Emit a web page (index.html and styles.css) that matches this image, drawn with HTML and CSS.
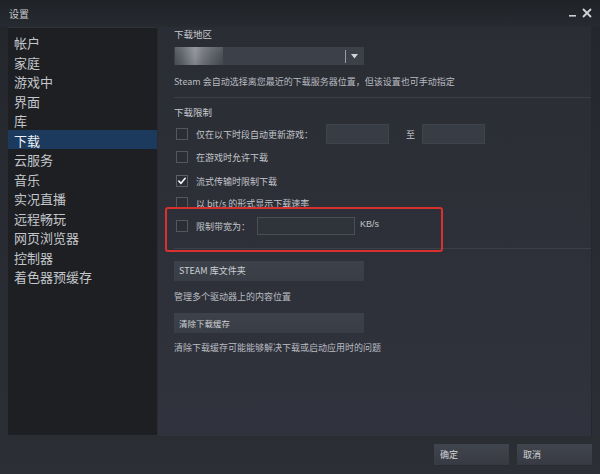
FILE: index.html
```html
<!DOCTYPE html>
<html lang="zh-CN">
<head>
<meta charset="utf-8">
<title>设置</title>
<link rel="stylesheet" href="styles.css">
</head>
<body>
<div class="window">
  <header class="titlebar">
    <span class="title">设置</span>
    <div class="controls">
      <svg class="ctl" width="8" height="10" viewBox="0 0 8 10"><rect x="0" y="7" width="7" height="1.6" fill="#c9ccd0"/></svg>
      <svg class="ctl" width="10" height="10" viewBox="0 0 10 10"><path d="M1 1 L9 9 M9 1 L1 9" stroke="#d2d5d8" stroke-width="1.8" fill="none"/></svg>
    </div>
  </header>
  <div class="main">
    <nav class="sidebar">
      <div class="nav-item">帐户</div>
      <div class="nav-item">家庭</div>
      <div class="nav-item">游戏中</div>
      <div class="nav-item">界面</div>
      <div class="nav-item">库</div>
      <div class="nav-item active">下载</div>
      <div class="nav-item">云服务</div>
      <div class="nav-item">音乐</div>
      <div class="nav-item">实况直播</div>
      <div class="nav-item">远程畅玩</div>
      <div class="nav-item">网页浏览器</div>
      <div class="nav-item">控制器</div>
      <div class="nav-item">着色器预缓存</div>
    </nav>
    <section class="content">
      <div class="label first">下载地区</div>
      <div class="dropdown">
        <div class="blurred"></div>
        <div class="dd-spacer"></div>
        <div class="dd-sep"></div>
        <svg class="dd-arrow" width="7" height="5" viewBox="0 0 7 5"><path d="M0 0 H7 L3.5 4.5 Z" fill="#d0d3d7"/></svg>
      </div>
      <div class="desc d1">Steam 会自动选择离您最近的下载服务器位置，但该设置也可手动指定</div>
      <div class="sep s1"></div>
      <div class="label l2">下载限制</div>

      <div class="check-row r1">
        <span class="checkbox"></span>
        <span class="row-text w-fixed">仅在以下时段自动更新游戏：</span>
        <span class="field time"></span>
        <span class="to">至</span>
        <span class="field time"></span>
      </div>
      <div class="check-row r2">
        <span class="checkbox"></span>
        <span class="row-text">在游戏时允许下载</span>
      </div>
      <div class="check-row r3">
        <span class="checkbox checked">
          <svg width="12" height="12" viewBox="0 0 12 12"><path d="M2.2 6.2 L4.8 8.8 L9.8 2.8" stroke="#f2f3f4" stroke-width="2" fill="none" stroke-linecap="round" stroke-linejoin="round"/></svg>
        </span>
        <span class="row-text">流式传输时限制下载</span>
      </div>
      <div class="check-row r4">
        <span class="checkbox"></span>
        <span class="row-text">以 bit/s 的形式显示下载速率</span>
      </div>
      <div class="check-row r5">
        <span class="checkbox"></span>
        <span class="row-text">限制带宽为：</span>
        <span class="field bw"></span>
        <span class="unit">KB/s</span>
      </div>
      <div class="sep s2"></div>

      <div class="btn b1">STEAM 库文件夹</div>
      <div class="desc d2">管理多个驱动器上的内容位置</div>
      <div class="btn b2">清除下载缓存</div>
      <div class="desc d3">清除下载缓存可能能够解决下载或启动应用时的问题</div>

      <div class="highlight-box"></div>
    </section>
  </div>
  <footer class="footer">
    <div class="fbtn">确定</div>
    <div class="fbtn">取消</div>
  </footer>
</div>
</body>
</html>
```

FILE: styles.css
```css
* { box-sizing: border-box; }
html, body { margin: 0; padding: 0; }
body {
  width: 600px;
  height: 474px;
  overflow: hidden;
  background: #26292e;
  font-family: "Noto Sans CJK SC", "Noto Sans", "Liberation Sans", sans-serif;
  color: #c4c7cc;
}
.window {
  width: 600px;
  height: 474px;
  display: flex;
  flex-direction: column;
  background: linear-gradient(180deg, #23262b 0, #282b31 40%, #2b2e34 100%);
}
.titlebar {
  height: 27px;
  display: flex;
  align-items: center;
  justify-content: space-between;
  padding: 0 8px 0 9px;
  background: linear-gradient(180deg, #1f2226 0, #272a30 100%);
}
.title {
  font-size: 10px;
  color: #c4c7cb;
  line-height: 12px;
}
.controls {
  display: flex;
  align-items: center;
  gap: 5px;
  margin-top: -2px;
}
.ctl { display: block; }
.main {
  height: 409px;
  display: flex;
  padding: 0 8px;
}
.sidebar {
  width: 149px;
  background: #1d1f23;
  border-top: 1px solid #30333a;
  border-bottom: 1px solid #2c2f35;
  padding-top: 4px;
}
.nav-item {
  height: 19.5px;
  line-height: 19.5px;
  padding: 1px 0 0 6px;
  font-size: 13px;
  color: #c3c6ca;
  white-space: nowrap;
}
.nav-item.active {
  background: #1b3a5e;
  color: #eef1f4;
}
.content {
  position: relative;
  flex: 1;
  margin-left: 1px;
  padding-left: 16px;
  background: linear-gradient(180deg, #2a2d33 0, #2d3038 50%, #30333d 100%);
  border-right: 1px solid #26282d;
  font-size: 9px;
}
.label {
  height: 14px;
  line-height: 14px;
  font-size: 9.5px;
  color: #c7cace;
}
.first { margin-top: 0; }
.dropdown {
  margin-top: 6px;
  width: 190px;
  height: 18px;
  background: #3c4048;
  display: flex;
  align-items: center;
}
.blurred {
  width: 48px;
  height: 18px;
  margin-left: 1px;
  background:
    linear-gradient(180deg, rgba(255,255,255,0.08) 0, rgba(0,0,0,0) 50%, rgba(0,0,0,0.1) 100%),
    linear-gradient(90deg, #50545c 0, #5f636b 14%, #7b7e86 30%, #8e9199 42%, #74777f 58%, #60636b 76%, #4a4e56 100%);
}
.dd-spacer { flex: 1; }
.dd-sep {
  width: 1px;
  height: 13px;
  background: #9a9da3;
  margin-right: 5px;
}
.dd-arrow { display: block; margin-right: 6px; }
.desc {
  height: 14px;
  line-height: 14px;
  font-size: 9px;
  color: #b9bcc1;
  white-space: nowrap;
}
.d1 { margin-top: 10px; }
.sep {
  height: 1px;
  background: #3b3f47;
}
.s1 { margin-top: 8px; }
.l2 { margin-top: 7px; }
.check-row {
  height: 20px;
  display: flex;
  align-items: center;
  font-size: 9px;
  color: #c2c5ca;
  white-space: nowrap;
}
.r1 { margin-top: 5px; }
.r2 { margin-top: 3px; }
.r3 { margin-top: 4px; }
.r4 { margin-top: 2px; }
.r5 { margin-top: 3px; }
.checkbox {
  width: 12px;
  height: 12px;
  margin-left: 2px;
  border: 1px solid #54575e;
  background: #2b2e35;
  display: flex;
  align-items: center;
  justify-content: center;
  flex: none;
}
.checkbox.checked { border-color: #5c6067; }
.checkbox svg { display: block; }
.row-text { margin-left: 8px; }
.w-fixed { width: 130px; }
.field {
  display: block;
  background: #383c44;
  border: 1px solid #3f434b;
}
.time { width: 63px; height: 20px; }
.to {
  margin-left: 17px;
  width: 16px;
  color: #c2c5ca;
}
.bw {
  width: 98px;
  height: 18px;
  margin-left: 7px;
  background: #2f333a;
  border-color: #4a4e56;
}
.unit {
  margin-left: 5px;
  margin-top: -4px;
  font-family: "Liberation Sans", "Noto Sans", sans-serif;
  font-size: 9px;
}
.s2 { margin-top: 12px; }
.btn {
  width: 190px;
  height: 20px;
  line-height: 20px;
  padding-left: 5px;
  background: linear-gradient(180deg, #3d4149 0, #393d45 100%);
  font-size: 9px;
  color: #ccd0d5;
  white-space: nowrap;
}
.b1 { margin-top: 12px; }
.d2 { margin-top: 9px; }
.b2 { margin-top: 9px; font-size: 8.5px; }
.d3 { margin-top: 8px; }
.highlight-box {
  position: absolute;
  left: 7px;
  top: 180px;
  width: 278px;
  height: 45px;
  border: 2px solid #d9322e;
  border-radius: 3px;
}
.footer {
  height: 38px;
  display: flex;
  justify-content: flex-end;
  gap: 8px;
  padding: 8px 8px 0 0;
  background: linear-gradient(180deg, #2a2d32 0, #2c2f35 100%);
}
.fbtn {
  width: 75px;
  height: 22px;
  line-height: 22px;
  padding-left: 6px;
  font-size: 9px;
  color: #d2d5d9;
  background: linear-gradient(180deg, #41454d 0, #373a42 100%);
  box-shadow: inset 0 -1px 0 #2a2c31;
}
```
